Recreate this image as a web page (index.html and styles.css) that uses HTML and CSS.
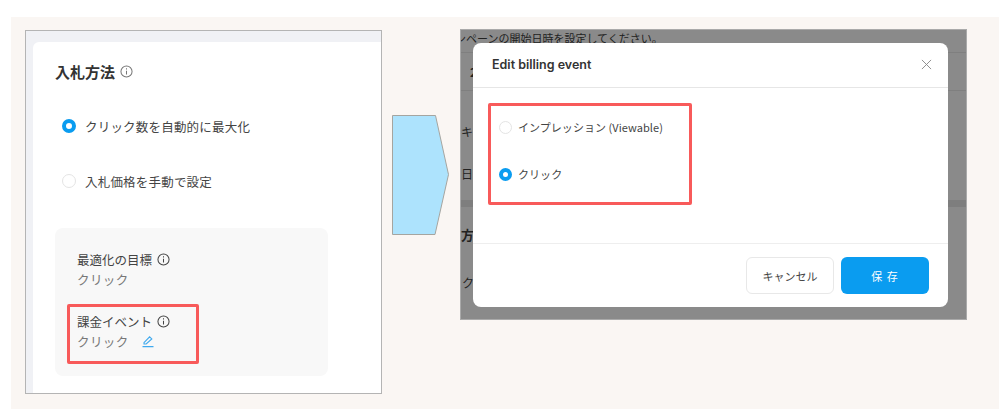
FILE: index.html
```html
<!DOCTYPE html>
<html lang="ja">
<head>
    <meta charset="UTF-8">
    <title>Edit billing event</title>
    <link rel="stylesheet" href="styles.css">
</head>
<body>
    <div class="stage">
        <!-- left screenshot -->
        <div class="shot-left">
            <div class="card">
                <div class="card-title">入札方法
                    <svg class="info info-light" viewBox="0 0 14 14"><circle cx="7" cy="7" r="6"/><path d="M7 6.2v4M7 3.6v1.2"/></svg>
                </div>
                <div class="radio-row first">
                    <span class="radio on"></span>クリック数を自動的に最大化
                </div>
                <div class="radio-row second">
                    <span class="radio"></span>入札価格を手動で設定
                </div>
                <div class="summary">
                    <div class="summary-label">最適化の目標
                        <svg class="info" viewBox="0 0 14 14"><circle cx="7" cy="7" r="6"/><path d="M7 6.2v4M7 3.6v1.2"/></svg>
                    </div>
                    <div class="summary-value">クリック</div>
                    <div class="red-box billing">
                        <div class="summary-label">課金イベント
                            <svg class="info" viewBox="0 0 14 14"><circle cx="7" cy="7" r="6"/><path d="M7 6.2v4M7 3.6v1.2"/></svg>
                        </div>
                        <div class="summary-value">クリック
                            <svg class="edit" viewBox="0 0 14 14"><path d="M3 8.6 8.6 2.8l2.2 2.1-5.6 5.1H3zM1.5 12.6h11"/></svg>
                        </div>
                    </div>
                </div>
            </div>
        </div>

        <svg class="arrow" viewBox="0 0 57 120"><path d="M.5.5h43L56.5 59.5 43 119.5H.5z"/></svg>

        <!-- right screenshot -->
        <div class="shot-right">
            <div class="dim-row dim-top">ンペーンの開始日時を設定してください。</div>
            <div class="dim-row dim-second">2</div>
            <div class="dim-row dim-third">キ</div>
            <div class="dim-row dim-fourth">日を</div>
            <div class="dim-band"></div>
            <div class="dim-row dim-fifth">方</div>
            <div class="dim-row dim-sixth">ク</div>

            <div class="modal">
                <div class="modal-header">
                    <span class="modal-title">Edit billing event</span>
                    <svg class="close" viewBox="0 0 12 12"><path d="M1 1l10 10M11 1 1 11"/></svg>
                </div>
                <div class="modal-body">
                    <div class="red-box options">
                        <div class="option"><span class="radio"></span>インプレッション (Viewable)</div>
                        <div class="option"><span class="radio on"></span>クリック</div>
                    </div>
                </div>
                <div class="modal-footer">
                    <button class="btn btn-cancel">キャンセル</button>
                    <button class="btn btn-save">保 存</button>
                </div>
            </div>
        </div>
    </div>
</body>
</html>
```

FILE: styles.css
```css
* {
    box-sizing: border-box;
}

body {
    margin: 0;
    height: 412px;
    overflow: hidden;
    background-color: #fff;
    font-family: "Noto Sans CJK JP", "Noto Sans", sans-serif;
    color: #444;
}

.stage {
    display: flex;
    align-items: flex-start;
    width: 988px;
    height: 392px;
    margin: 17px 0 0 11px;
    padding: 13px 0 0 14px;
    background-color: #faf6f3;
}

/* Left screenshot */
.shot-left {
    width: 357px;
    height: 364px;
    padding: 11px 0 0 7px;
    background-color: #f0f1f5;
    border: 1px solid #b4b4b4;
    flex-shrink: 0;
}

.card {
    height: 100%;
    padding: 17px 0 0 22px;
    background-color: #fff;
    border-radius: 6px 0 0 0;
}

.card-title {
    display: flex;
    align-items: center;
    gap: 5px;
    height: 24px;
    font-size: 15px;
    font-weight: 700;
    color: #333;
}

.info {
    width: 13px;
    height: 13px;
    fill: none;
    stroke: #444;
    stroke-width: 1.1;
}

.info-light {
    stroke: #777;
}

.radio-row {
    display: flex;
    align-items: center;
    gap: 9px;
    height: 20px;
    margin-left: 7px;
    font-size: 12.5px;
    letter-spacing: 0.2px;
}

.radio-row.first {
    margin-top: 33px;
}

.radio-row.second {
    margin-top: 35px;
}

.radio {
    width: 14px;
    height: 14px;
    border-radius: 50%;
    background-color: #fff;
    border: 1px solid #e4e4e4;
    flex-shrink: 0;
}

.radio.on {
    border: 4px solid #0a9cf0;
}

.summary {
    width: 273px;
    height: 148px;
    margin-top: 37px;
    padding: 21px 0 0 22px;
    background-color: #f8f8f8;
    border-radius: 8px;
}

.summary-label {
    display: flex;
    align-items: center;
    gap: 5px;
    height: 20px;
    font-size: 12.5px;
}

.summary-value {
    display: flex;
    align-items: center;
    height: 20px;
    font-size: 12.5px;
    letter-spacing: 0.4px;
    color: #777;
}

.red-box {
    border: 3px solid #f85a5a;
    border-radius: 2px;
}

.billing {
    width: 132px;
    height: 60px;
    margin: 15px 0 0 -10px;
    padding: 4px 0 0 7px;
}

.edit {
    width: 14px;
    height: 14px;
    margin-left: 12px;
    fill: none;
    stroke: #3fa9ee;
    stroke-width: 1.1;
}

/* Arrow between the shots */
.arrow {
    width: 57px;
    height: 120px;
    margin: 85px 0 0 10px;
    flex-shrink: 0;
    fill: #ade3fd;
    stroke: #a5a5a0;
}

/* Right screenshot */
.shot-right {
    position: relative;
    width: 507px;
    height: 291px;
    margin: -1px 0 0 11px;
    overflow: hidden;
    background-color: #8a8a8a;
    border: 1px solid #aaa;
    font-size: 12px;
    color: #222;
}

.dim-row {
    display: flex;
    align-items: center;
    height: 20px;
    white-space: nowrap;
}

.dim-top {
    height: 22px;
    padding-bottom: 7px;
    margin-left: -6px;
    font-size: 11px;
}

.dim-second {
    height: 39px;
    padding-left: 9px;
    font-weight: 700;
    border-top: 1px solid #7f7f7f;
    border-bottom: 1px solid #7f7f7f;
}

.dim-third {
    margin-top: 30px;
}

.dim-fourth {
    margin-top: 22px;
}

.dim-band {
    height: 7px;
    margin-top: 17px;
    background-color: #7e7e7e;
}

.dim-fifth {
    margin-top: 17px;
    font-weight: 700;
    font-size: 13px;
}

.dim-sixth {
    margin-top: 28px;
    padding-left: 1px;
}

/* Modal over the dimmed page */
.modal {
    position: absolute;
    top: 13px;
    left: 12px;
    width: 475px;
    height: 264px;
    display: flex;
    flex-direction: column;
    background-color: #fff;
    border-radius: 8px;
    color: #444;
}

.modal-header {
    display: flex;
    align-items: center;
    justify-content: space-between;
    height: 45px;
    padding: 0 16px 1px 19px;
    border-bottom: 1px solid #e6e6e6;
}

.modal-title {
    font-family: Inter, "Noto Sans", sans-serif;
    font-size: 12.5px;
    font-weight: 600;
    color: #333;
}

.close {
    width: 11px;
    height: 11px;
    fill: none;
    stroke: #888;
    stroke-width: 1;
}

.modal-body {
    height: 156px;
    padding: 15px 0 0 15px;
    border-bottom: 1px solid #eee;
}

.options {
    width: 204px;
    height: 102px;
    padding: 11px 0 0 8px;
}

.option {
    display: flex;
    align-items: center;
    gap: 6px;
    height: 20px;
    margin-bottom: 27px;
    font-size: 11px;
    letter-spacing: 0.05px;
}

.option .radio {
    width: 13px;
    height: 13px;
}

.modal-footer {
    display: flex;
    justify-content: flex-end;
    gap: 7px;
    padding: 13px 19px 0 0;
}

.btn {
    width: 88px;
    height: 37px;
    border-radius: 6px;
    font-family: inherit;
    font-size: 11px;
}

.btn-cancel {
    background-color: #fff;
    border: 1px solid #e8e8e8;
    color: #444;
}

.btn-save {
    background-color: #0a9cf0;
    border: none;
    color: #fff;
    letter-spacing: 1px;
}
```
